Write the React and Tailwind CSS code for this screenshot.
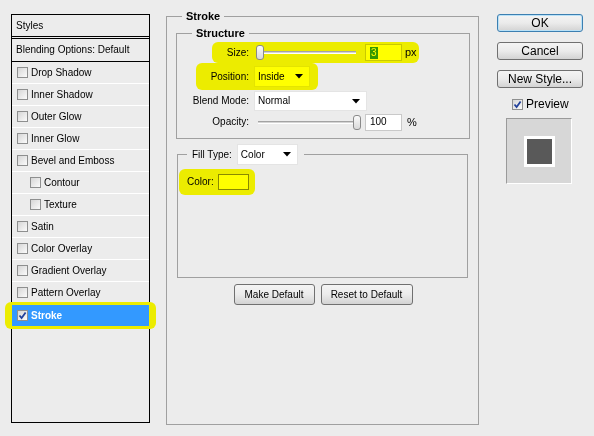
import React from "react";

const layers = [
  { label: "Drop Shadow" },
  { label: "Inner Shadow" },
  { label: "Outer Glow" },
  { label: "Inner Glow" },
  { label: "Bevel and Emboss" },
  { label: "Contour", indent: true },
  { label: "Texture", indent: true },
  { label: "Satin" },
  { label: "Color Overlay" },
  { label: "Gradient Overlay" },
  { label: "Pattern Overlay" },
];

function Check({ checked }) {
  return (
    <span className="w-[11px] h-[11px] shrink-0 border border-[#8e8f8f] bg-linear-to-br from-[#d6d6d6] to-[#fbfbfb] flex items-center justify-center">
      {checked && (
        <svg width="9" height="9" viewBox="0 0 9 9">
          <path d="M1.5 4.5 L3.6 7 L7.6 1.5" fill="none" stroke="#22419b" strokeWidth="1.8" />
        </svg>
      )}
    </span>
  );
}

function Arrow() {
  return (
    <svg width="8" height="5" viewBox="0 0 8 5" className="shrink-0">
      <path d="M0 0 H8 L4 4.5 Z" fill="#000" />
    </svg>
  );
}

function Select({ value, className }) {
  return (
    <div
      className={`flex items-center justify-between bg-white border border-[#e4e4e4] pl-[3px] pr-[6px] text-[10px] ${className}`}
    >
      <span>{value}</span>
      <Arrow />
    </div>
  );
}

function Slider({ thumb }) {
  return (
    <div className="relative w-[108px] h-[17px] flex items-center pl-[4px] pr-[6px]">
      <div className="w-full h-[3px] border-t border-[#a3a3a3] border-b border-b-white bg-[#d4d4d4]" />
      <div
        className={`absolute top-[1px] w-[8px] h-[15px] rounded-[3px] border border-[#8a8a8a] bg-linear-to-b from-[#fbfbfb] to-[#d9d9d9] ${thumb}`}
      />
    </div>
  );
}

function NumBox({ children }) {
  return (
    <div className="w-[37px] h-[17px] bg-white border border-[#c9c9c9] flex items-center pl-[4px] text-[10px]">
      {children}
    </div>
  );
}

function Btn({ children, primary, className = "" }) {
  return (
    <div
      className={`flex items-center justify-center rounded-[3px] border bg-linear-to-b from-[#f4f4f4] via-[#ebebeb] to-[#d3d3d3] ${
        primary ? "border-[#3c7fb1] shadow-[inset_0_0_0_1px_#b9e1f7]" : "border-[#707070]"
      } ${className}`}
    >
      {children}
    </div>
  );
}

function Glow({ className }) {
  return <div className={`absolute rounded-[6px] bg-[#ffff00] mix-blend-multiply pointer-events-none ${className}`} />;
}

export default function App() {
  return (
    <div className="w-[594px] h-[436px] bg-[#ececec] flex overflow-hidden text-black text-[10px] leading-none font-['Liberation_Sans',Arial,sans-serif]">
      {/* Styles list */}
      <div className="ml-[11px] mt-[14px] w-[139px] h-[409px] border border-black flex flex-col shrink-0">
        <div className="h-[24px] border-b-[3px] border-double border-black flex items-center pl-[4px]">
          Styles
        </div>
        <div className="h-[23px] border-b border-black flex items-center pl-[4px]">
          Blending Options: Default
        </div>
        {layers.map((l) => (
          <div
            key={l.label}
            className={`h-[22px] border-b border-white flex items-center gap-[3px] ${l.indent ? "pl-[18px]" : "pl-[5px]"}`}
          >
            <Check />
            <span>{l.label}</span>
          </div>
        ))}
        <div className="-mx-[7px] -mt-[2px] rounded-[6px] bg-[#ecec00] px-[7px] py-[3px]">
          <div className="h-[21px] bg-[#3399ff] flex items-center gap-[3px] pl-[5px] text-white font-bold">
            <Check checked />
            <span>Stroke</span>
          </div>
        </div>
      </div>

      {/* Stroke settings */}
      <div className="ml-[16px] w-[313px] shrink-0">
        <fieldset className="mt-[10px] h-[415px] border border-[#a0a0a0] pl-[9px] pr-[8px]">
          <legend className="ml-[6px] px-[4px] font-bold text-[11px] leading-[12px]">Stroke</legend>

          <fieldset className="mt-[5px] h-[112px] border border-[#a0a0a0]">
            <legend className="ml-[15px] px-[4px] font-bold text-[11px] leading-[12px]">Structure</legend>
            <div className="relative pt-[4px] flex flex-col">
              <Glow className="left-[35px] top-[3px] w-[207px] h-[21px]" />
              <Glow className="left-[19px] top-[24px] w-[122px] h-[27px]" />

              <div className="h-[19px] flex items-center">
                <span className="w-[72px] text-right">Size:</span>
                <div className="ml-[5px] flex items-center">
                  <Slider thumb="left-[2px]" />
                  <div className="ml-[3px]">
                    <NumBox>
                      <span className="bg-[#3399ff] text-white px-[1px] leading-[12px]">3</span>
                    </NumBox>
                  </div>
                  <span className="ml-[3px] text-[11px]">px</span>
                </div>
              </div>

              <div className="mt-[2px] h-[25px] flex items-center">
                <span className="w-[72px] text-right">Position:</span>
                <Select value="Inside" className="ml-[5px] w-[56px] h-[21px]" />
              </div>

              <div className="h-[24px] flex items-center">
                <span className="w-[72px] text-right">Blend Mode:</span>
                <Select value="Normal" className="ml-[5px] w-[113px] h-[20px]" />
              </div>

              <div className="h-[18px] flex items-center">
                <span className="w-[72px] text-right">Opacity:</span>
                <div className="ml-[5px] flex items-center">
                  <Slider thumb="left-[99px]" />
                  <div className="ml-[3px]">
                    <NumBox>100</NumBox>
                  </div>
                  <span className="ml-[5px] text-[11px]">%</span>
                </div>
              </div>
            </div>
          </fieldset>

          <fieldset className="mt-[5px] ml-[1px] w-[291px] h-[134px] border border-[#a0a0a0]">
            <legend className="ml-[9px] pl-[5px] pr-[6px]">
              <div className="flex items-center gap-[5px]">
                <span>Fill Type:</span>
                <Select value="Color" className="w-[61px] h-[21px]" />
              </div>
            </legend>
            <div className="pl-[1px] pt-[4px]">
              <div className="relative inline-flex items-center gap-[4px] pl-[8px] pr-[6px] py-[5px]">
                <Glow className="inset-0" />
                <span>Color:</span>
                <div className="w-[31px] h-[16px] bg-white border border-[#8a8a8a]" />
              </div>
            </div>
          </fieldset>

          <div className="mt-[6px] flex justify-center gap-[6px]">
            <Btn className="w-[81px] h-[21px]">Make Default</Btn>
            <Btn className="w-[92px] h-[21px]">Reset to Default</Btn>
          </div>
        </fieldset>
      </div>

      {/* Dialog buttons */}
      <div className="ml-[18px] mt-[14px] w-[86px] flex flex-col text-[12px] shrink-0">
        <Btn primary className="h-[18px]">OK</Btn>
        <Btn className="mt-[10px] h-[18px]">Cancel</Btn>
        <Btn className="mt-[10px] h-[18px]">New Style...</Btn>
        <div className="mt-[10px] ml-[15px] flex items-center gap-[3px]">
          <Check checked />
          <span>Preview</span>
        </div>
        <div className="mt-[8px] ml-[9px] w-[66px] h-[66px] bg-[#d7d7d7] border border-[#9a9a9a] border-r-white border-b-white flex items-center justify-center">
          <div className="w-[31px] h-[31px] border-[3px] border-white bg-[#595959]" />
        </div>
      </div>
    </div>
  );
}
